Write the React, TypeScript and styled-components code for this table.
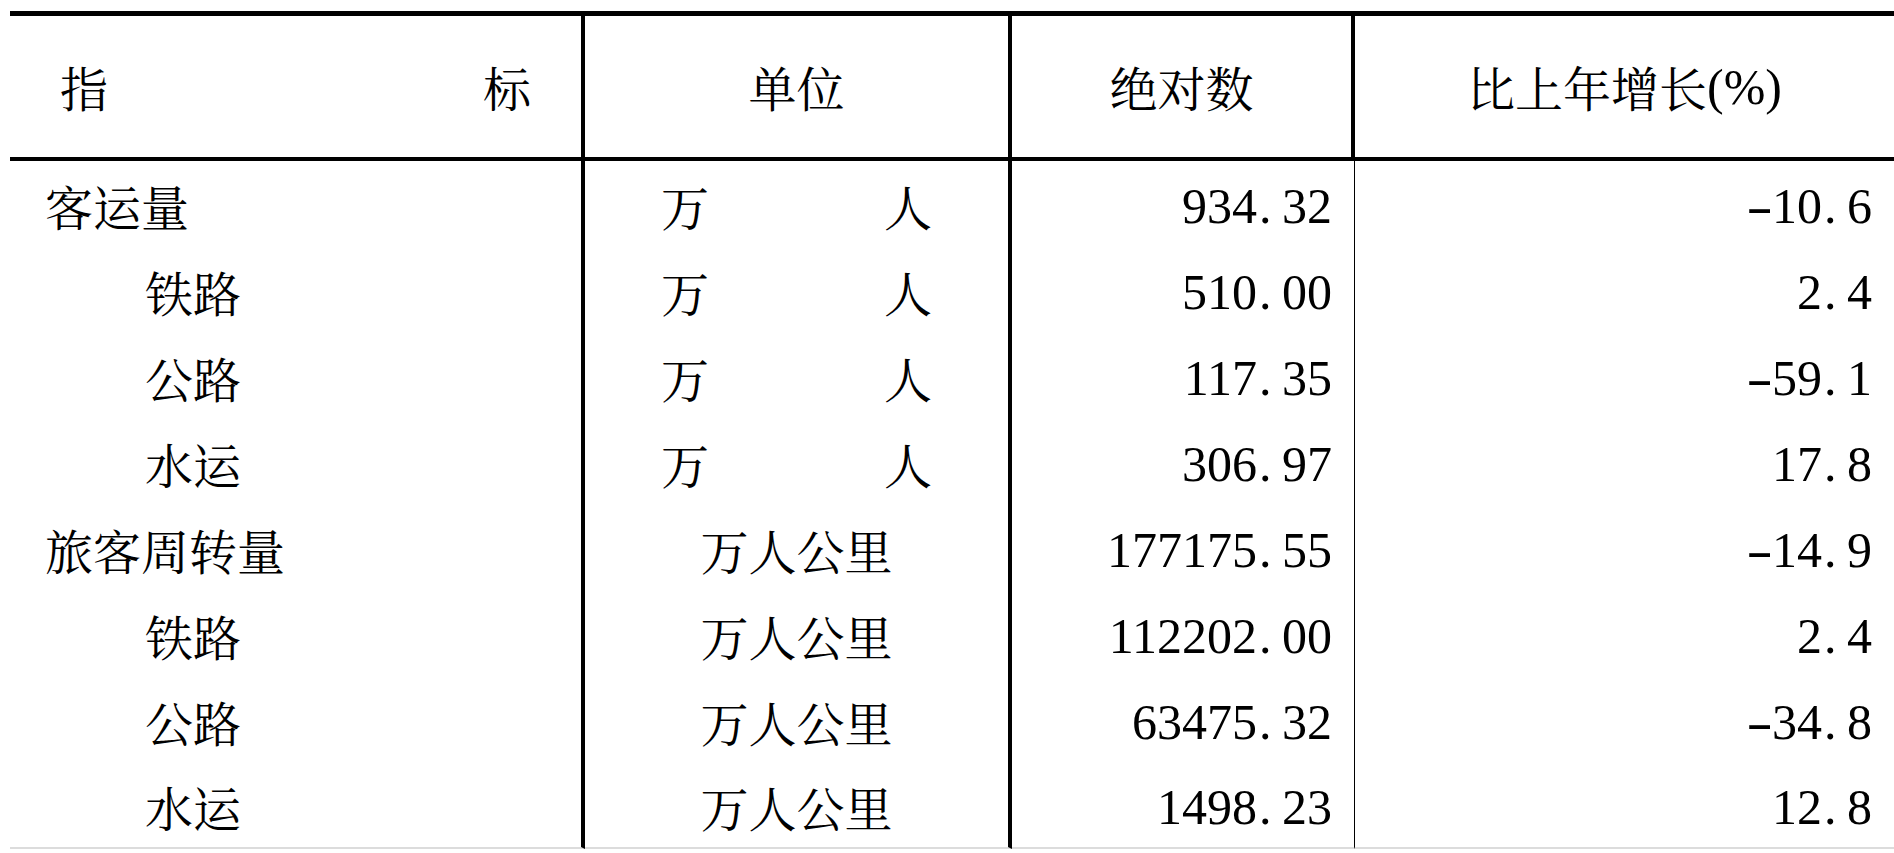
import styled, { createGlobalStyle } from "styled-components";

const GlobalStyle = createGlobalStyle`
  html, body {
    margin: 0;
    padding: 0;
    background: #fff;
  }
  body {
    font-family: "Noto Serif CJK SC", serif;
    color: #000;
    overflow: hidden;
  }
`;

const Page = styled.div`
  width: 1894px;
  height: 853px;
  box-sizing: border-box;
  padding: 11px 0 0 10px;
  overflow: hidden;
`;

const Table = styled.div`
  display: grid;
  grid-template-columns: 575px 427px 343px 1fr;
  border-top: 5px solid #000;
`;

interface CellProps {
  $line?: number;
  $align?: "left" | "center" | "right" | "spread";
  $pl?: number;
  $pr?: number;
  $last?: boolean;
}

const justify = (a?: string) =>
  a === "right"
    ? "flex-end"
    : a === "center"
    ? "center"
    : a === "spread"
    ? "space-between"
    : "flex-start";

const HeadCell = styled.div<CellProps>`
  height: 145px;
  box-sizing: border-box;
  display: flex;
  align-items: center;
  justify-content: ${({ $align }) => justify($align)};
  padding: 0 ${({ $pr }) => $pr ?? 0}px 0 ${({ $pl }) => $pl ?? 0}px;
  border-right: ${({ $line }) => $line ?? 0}px solid #000;
  border-bottom: 4px solid #000;
  font-family: "Noto Serif CJK SC", serif;
  font-size: 48px;
  line-height: 1;
`;

const BodyCell = styled.div<CellProps>`
  height: 86px;
  box-sizing: border-box;
  display: flex;
  align-items: center;
  justify-content: ${({ $align }) => justify($align)};
  padding: 4px ${({ $pr }) => $pr ?? 0}px 0 ${({ $pl }) => $pl ?? 0}px;
  border-right: ${({ $line }) => $line ?? 0}px solid #000;
  border-bottom: ${({ $last }) => ($last ? "2px solid #dcdcdc" : "none")};
  font-family: "Noto Serif CJK SC", serif;
  font-size: 48px;
  line-height: 1;
  white-space: nowrap;
`;

const Spread = styled.div`
  width: 271px;
  display: flex;
  justify-content: space-between;
`;

const Figure = styled.span`
  font-family: "Liberation Serif", "Times New Roman", serif;
  font-size: 50px;
`;

const Slot = styled.span<{ $dash?: boolean }>`
  display: inline-block;
  width: 0.5em;
  text-align: ${({ $dash }) => ($dash ? "center" : "left")};
  padding-left: ${({ $dash }) => ($dash ? 0 : "0.04em")};
  box-sizing: border-box;
  transform: ${({ $dash }) => ($dash ? "scaleX(1.6)" : "none")};
`;

function Num({ value }: { value: string }) {
  return (
    <Figure>
      {value.split("").map((ch, i) =>
        ch === "." || ch === "-" ? (
          <Slot key={i} $dash={ch === "-"}>
            {ch}
          </Slot>
        ) : (
          ch
        )
      )}
    </Figure>
  );
}

type Row = {
  name: string;
  sub: boolean;
  unit: "person" | "pkm";
  value: string;
  growth: string;
};

const rows: Row[] = [
  { name: "客运量", sub: false, unit: "person", value: "934.32", growth: "-10.6" },
  { name: "铁路", sub: true, unit: "person", value: "510.00", growth: "2.4" },
  { name: "公路", sub: true, unit: "person", value: "117.35", growth: "-59.1" },
  { name: "水运", sub: true, unit: "person", value: "306.97", growth: "17.8" },
  { name: "旅客周转量", sub: false, unit: "pkm", value: "177175.55", growth: "-14.9" },
  { name: "铁路", sub: true, unit: "pkm", value: "112202.00", growth: "2.4" },
  { name: "公路", sub: true, unit: "pkm", value: "63475.32", growth: "-34.8" },
  { name: "水运", sub: true, unit: "pkm", value: "1498.23", growth: "12.8" },
];

export default function App() {
  return (
    <>
      <GlobalStyle />
      <Page>
        <Table>
          <HeadCell $line={4} $align="spread" $pl={50} $pr={50}>
            <span>指</span>
            <span>标</span>
          </HeadCell>
          <HeadCell $line={4} $align="center">
            单位
          </HeadCell>
          <HeadCell $line={4} $align="center">
            绝对数
          </HeadCell>
          <HeadCell $align="center">
            比上年增长<Figure>(%)</Figure>
          </HeadCell>

          {rows.map((r, i) => {
            const last = i === rows.length - 1;
            return [
              <BodyCell key={`n${i}`} $line={4} $pl={r.sub ? 135 : 35} $last={last}>
                {r.name}
              </BodyCell>,
              <BodyCell key={`u${i}`} $line={4} $align="center" $last={last}>
                {r.unit === "person" ? (
                  <Spread>
                    <span>万</span>
                    <span>人</span>
                  </Spread>
                ) : (
                  "万人公里"
                )}
              </BodyCell>,
              <BodyCell key={`v${i}`} $line={1} $align="right" $pr={22} $last={last}>
                <Num value={r.value} />
              </BodyCell>,
              <BodyCell key={`g${i}`} $align="right" $pr={22} $last={last}>
                <Num value={r.growth} />
              </BodyCell>,
            ];
          })}
        </Table>
      </Page>
    </>
  );
}
